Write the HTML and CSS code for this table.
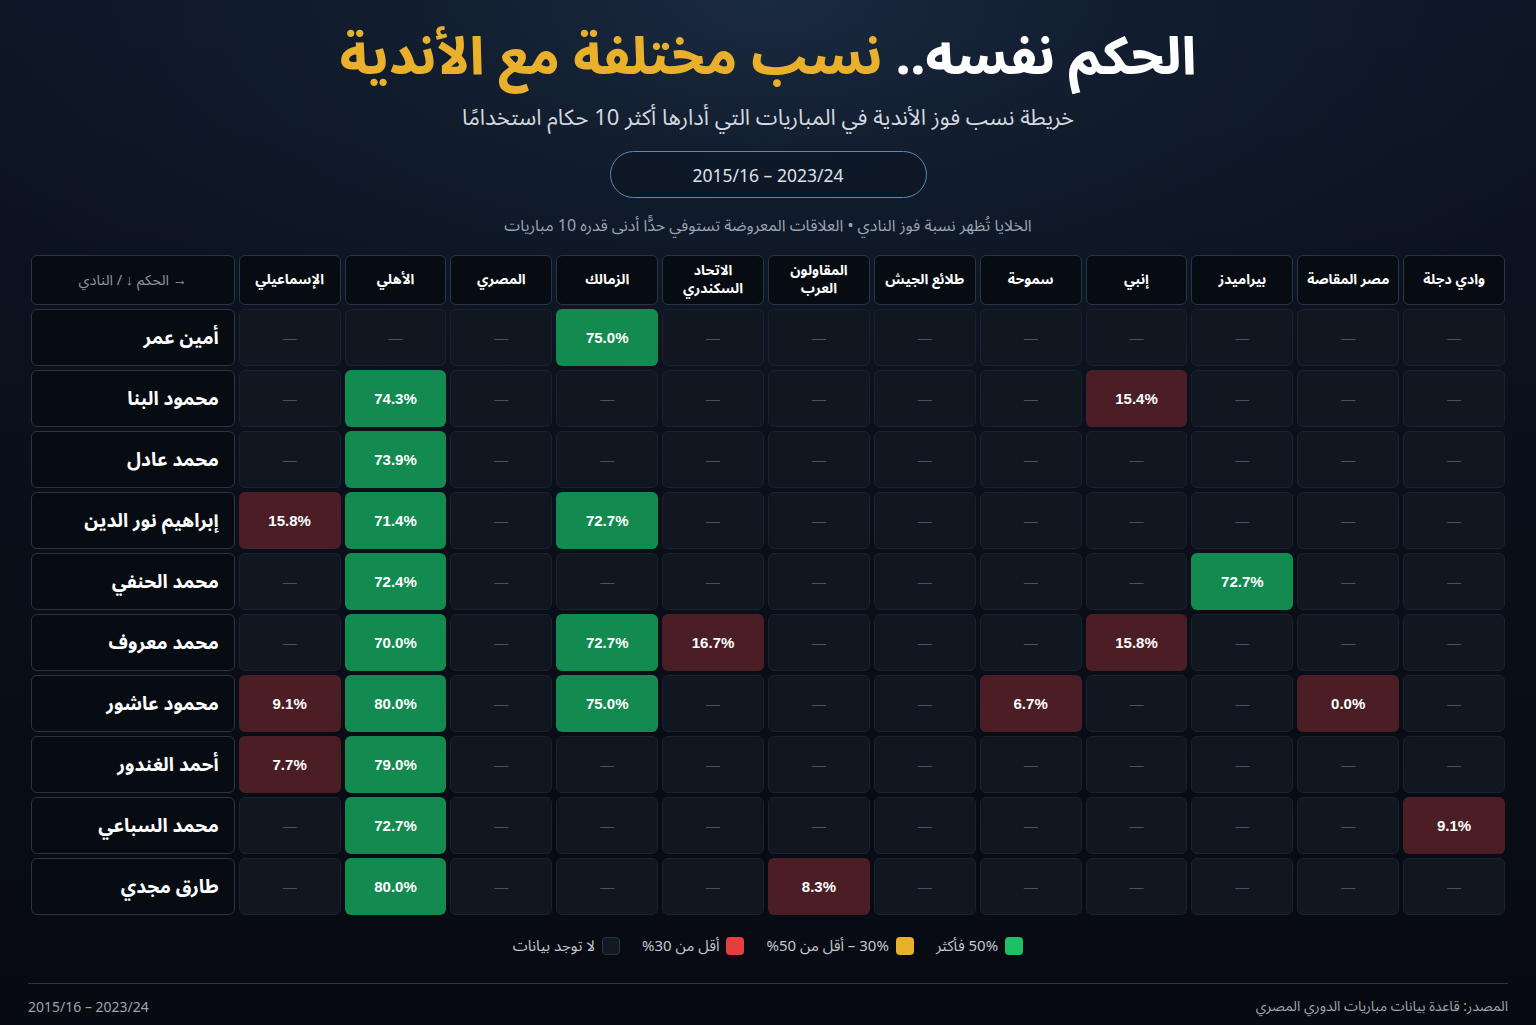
FILE: index.html
```html
<!DOCTYPE html>
<html lang="ar" dir="rtl">
<head>
<meta charset="utf-8">
<title>الحكم نفسه.. نسب مختلفة مع الأندية</title>
<link rel="stylesheet" href="styles.css">
</head>
<body>
<div class="page">
  <header class="top">
    <h1 class="title">الحكم نفسه.. <span class="gold">نسب مختلفة مع الأندية</span></h1>
    <p class="subtitle">خريطة نسب فوز الأندية في المباريات التي أدارها أكثر 10 حكام استخدامًا</p>
    <div class="pill" dir="ltr">2015/16 – 2023/24</div>
    <p class="note">الخلايا تُظهر نسبة فوز النادي • العلاقات المعروضة تستوفي حدًّا أدنى قدره 10 مباريات</p>
  </header>

  <div class="grid" dir="ltr">
    <div class="cell hd corner" dir="rtl"><span>→ الحكم ↓ / النادي</span></div>
    <div class="cell hd club" dir="rtl">الإسماعيلي</div>
    <div class="cell hd club" dir="rtl">الأهلي</div>
    <div class="cell hd club" dir="rtl">المصري</div>
    <div class="cell hd club" dir="rtl">الزمالك</div>
    <div class="cell hd club" dir="rtl"><span>الاتحاد<br>السكندري</span></div>
    <div class="cell hd club" dir="rtl"><span>المقاولون<br>العرب</span></div>
    <div class="cell hd club" dir="rtl">طلائع الجيش</div>
    <div class="cell hd club" dir="rtl">سموحة</div>
    <div class="cell hd club" dir="rtl">إنبي</div>
    <div class="cell hd club" dir="rtl">بيراميدز</div>
    <div class="cell hd club" dir="rtl">مصر المقاصة</div>
    <div class="cell hd club" dir="rtl">وادي دجلة</div>

    <!-- أمين عمر -->
    <div class="cell hd ref" dir="rtl">أمين عمر</div>
    <div class="cell e">—</div><div class="cell e">—</div><div class="cell e">—</div>
    <div class="cell g">75.0%</div>
    <div class="cell e">—</div><div class="cell e">—</div><div class="cell e">—</div><div class="cell e">—</div>
    <div class="cell e">—</div><div class="cell e">—</div><div class="cell e">—</div><div class="cell e">—</div>

    <!-- محمود البنا -->
    <div class="cell hd ref" dir="rtl">محمود البنا</div>
    <div class="cell e">—</div>
    <div class="cell g">74.3%</div>
    <div class="cell e">—</div><div class="cell e">—</div><div class="cell e">—</div><div class="cell e">—</div>
    <div class="cell e">—</div><div class="cell e">—</div>
    <div class="cell r">15.4%</div>
    <div class="cell e">—</div><div class="cell e">—</div><div class="cell e">—</div>

    <!-- محمد عادل -->
    <div class="cell hd ref" dir="rtl">محمد عادل</div>
    <div class="cell e">—</div>
    <div class="cell g">73.9%</div>
    <div class="cell e">—</div><div class="cell e">—</div><div class="cell e">—</div><div class="cell e">—</div>
    <div class="cell e">—</div><div class="cell e">—</div><div class="cell e">—</div><div class="cell e">—</div>
    <div class="cell e">—</div><div class="cell e">—</div>

    <!-- إبراهيم نور الدين -->
    <div class="cell hd ref" dir="rtl">إبراهيم نور الدين</div>
    <div class="cell r">15.8%</div>
    <div class="cell g">71.4%</div>
    <div class="cell e">—</div>
    <div class="cell g">72.7%</div>
    <div class="cell e">—</div><div class="cell e">—</div><div class="cell e">—</div><div class="cell e">—</div>
    <div class="cell e">—</div><div class="cell e">—</div><div class="cell e">—</div><div class="cell e">—</div>

    <!-- محمد الحنفي -->
    <div class="cell hd ref" dir="rtl">محمد الحنفي</div>
    <div class="cell e">—</div>
    <div class="cell g">72.4%</div>
    <div class="cell e">—</div><div class="cell e">—</div><div class="cell e">—</div><div class="cell e">—</div>
    <div class="cell e">—</div><div class="cell e">—</div><div class="cell e">—</div>
    <div class="cell g">72.7%</div>
    <div class="cell e">—</div><div class="cell e">—</div>

    <!-- محمد معروف -->
    <div class="cell hd ref" dir="rtl">محمد معروف</div>
    <div class="cell e">—</div>
    <div class="cell g">70.0%</div>
    <div class="cell e">—</div>
    <div class="cell g">72.7%</div>
    <div class="cell r">16.7%</div>
    <div class="cell e">—</div><div class="cell e">—</div><div class="cell e">—</div>
    <div class="cell r">15.8%</div>
    <div class="cell e">—</div><div class="cell e">—</div><div class="cell e">—</div>

    <!-- محمود عاشور -->
    <div class="cell hd ref" dir="rtl">محمود عاشور</div>
    <div class="cell r">9.1%</div>
    <div class="cell g">80.0%</div>
    <div class="cell e">—</div>
    <div class="cell g">75.0%</div>
    <div class="cell e">—</div><div class="cell e">—</div><div class="cell e">—</div>
    <div class="cell r">6.7%</div>
    <div class="cell e">—</div><div class="cell e">—</div>
    <div class="cell r">0.0%</div>
    <div class="cell e">—</div>

    <!-- أحمد الغندور -->
    <div class="cell hd ref" dir="rtl">أحمد الغندور</div>
    <div class="cell r">7.7%</div>
    <div class="cell g">79.0%</div>
    <div class="cell e">—</div><div class="cell e">—</div><div class="cell e">—</div><div class="cell e">—</div>
    <div class="cell e">—</div><div class="cell e">—</div><div class="cell e">—</div><div class="cell e">—</div>
    <div class="cell e">—</div><div class="cell e">—</div>

    <!-- محمد السباعي -->
    <div class="cell hd ref" dir="rtl">محمد السباعي</div>
    <div class="cell e">—</div>
    <div class="cell g">72.7%</div>
    <div class="cell e">—</div><div class="cell e">—</div><div class="cell e">—</div><div class="cell e">—</div>
    <div class="cell e">—</div><div class="cell e">—</div><div class="cell e">—</div><div class="cell e">—</div>
    <div class="cell e">—</div>
    <div class="cell r">9.1%</div>

    <!-- طارق مجدي -->
    <div class="cell hd ref" dir="rtl">طارق مجدي</div>
    <div class="cell e">—</div>
    <div class="cell g">80.0%</div>
    <div class="cell e">—</div><div class="cell e">—</div><div class="cell e">—</div>
    <div class="cell r">8.3%</div>
    <div class="cell e">—</div><div class="cell e">—</div><div class="cell e">—</div><div class="cell e">—</div>
    <div class="cell e">—</div><div class="cell e">—</div>
  </div>

  <div class="legend">
    <div class="item"><span class="sw sw-g"></span><span class="lt">50% فأكثر</span></div>
    <div class="item"><span class="sw sw-y"></span><span class="lt"><span class="ltr">30%</span> – أقل من <span class="ltr">%50</span></span></div>
    <div class="item"><span class="sw sw-r"></span><span class="lt">أقل من <span class="ltr">%30</span></span></div>
    <div class="item"><span class="sw sw-e"></span><span class="lt">لا توجد بيانات</span></div>
  </div>

  <footer class="foot" dir="ltr">
    <span class="fdate">2015/16 – 2023/24</span>
    <span class="fsrc" dir="rtl">المصدر: قاعدة بيانات مباريات الدوري المصري</span>
  </footer>
</div>
</body>
</html>
```

FILE: styles.css
```css
* { box-sizing: border-box; }

html, body {
  margin: 0;
  padding: 0;
}

body {
  min-height: 1025px;
  background:
    radial-gradient(ellipse 900px 420px at 50% 0%, #1a2a40 0%, rgba(20,33,52,0.6) 45%, rgba(10,15,25,0) 100%),
    linear-gradient(180deg, #0d1524 0%, #0a101b 45%, #070a11 100%);
  color: #fff;
  font-family: "Noto Sans Arabic", "Noto Sans", "DejaVu Sans", sans-serif;
}

.page {
  padding: 21px 28px 0;
}

.top {
  text-align: center;
}

.title {
  margin: 0;
  font-size: 51.5px;
  font-weight: 800;
  line-height: 74px;
  color: #ffffff;
}

.gold { color: #e9b12b; }

.subtitle {
  margin: 7px 0 0;
  font-size: 22px;
  line-height: 32px;
  color: #d3d8df;
}

.pill {
  width: 317px;
  height: 47px;
  margin: 17px auto 0;
  border: 1.5px solid #5b88b5;
  border-radius: 24px;
  display: flex;
  align-items: center;
  justify-content: center;
  font-family: "Noto Sans", "Open Sans", sans-serif;
  font-size: 17.5px;
  color: #dde2e8;
  background: rgba(10, 18, 30, 0.35);
}

.note {
  margin: 16px 0 0;
  font-size: 16px;
  line-height: 24px;
  color: #9ba4af;
}

.grid {
  margin: 17px 3px 0;
  display: grid;
  grid-template-columns: 2fr repeat(12, 1fr);
  grid-template-rows: 50px repeat(10, 57px);
  gap: 4px;
}

.cell {
  border-radius: 6px;
  display: flex;
  align-items: center;
  justify-content: center;
  text-align: center;
  font-family: "Liberation Sans", Arial, sans-serif;
  font-weight: 700;
  font-size: 15px;
  color: #ffffff;
}

.hd {
  background: #070b12;
  border: 1px solid #2a3543;
  font-family: "Noto Sans Arabic", "Noto Sans", sans-serif;
}

.club {
  font-size: 14px;
  line-height: 18px;
}

.corner {
  font-size: 14.5px;
  font-weight: 400;
  color: #8c96a2;
}

.ref {
  justify-content: flex-start;
  padding: 0 15px;
  font-size: 19px;
}

.e {
  background: #111720;
  border: 1px solid #1a222d;
  color: #4a525d;
  font-weight: 400;
  font-size: 14px;
}

.g {
  background: #138a50;
}

.r {
  background: #4b1e25;
}

.legend {
  margin-top: 20px;
  display: flex;
  justify-content: center;
  gap: 22px;
  font-size: 15px;
  color: #c2c8cf;
}

.item {
  display: flex;
  align-items: center;
  gap: 7px;
}

.lt { line-height: 22px; }

.ltr {
  direction: ltr;
  unicode-bidi: isolate;
}

.sw {
  width: 18px;
  height: 18px;
  border-radius: 4px;
  display: inline-block;
}

.sw-g { background: #1fbf66; }
.sw-y { background: #e9b12b; }
.sw-r { background: #e53e3e; }
.sw-e { background: #111923; border: 1px solid #2b3644; }

.foot {
  margin-top: 26px;
  border-top: 1px solid #2c3643;
  padding-top: 13px;
  display: flex;
  justify-content: space-between;
  font-size: 14px;
  line-height: 20px;
  color: #9ba4af;
}

.fdate {
  font-family: "Noto Sans", "Open Sans", sans-serif;
}
```
